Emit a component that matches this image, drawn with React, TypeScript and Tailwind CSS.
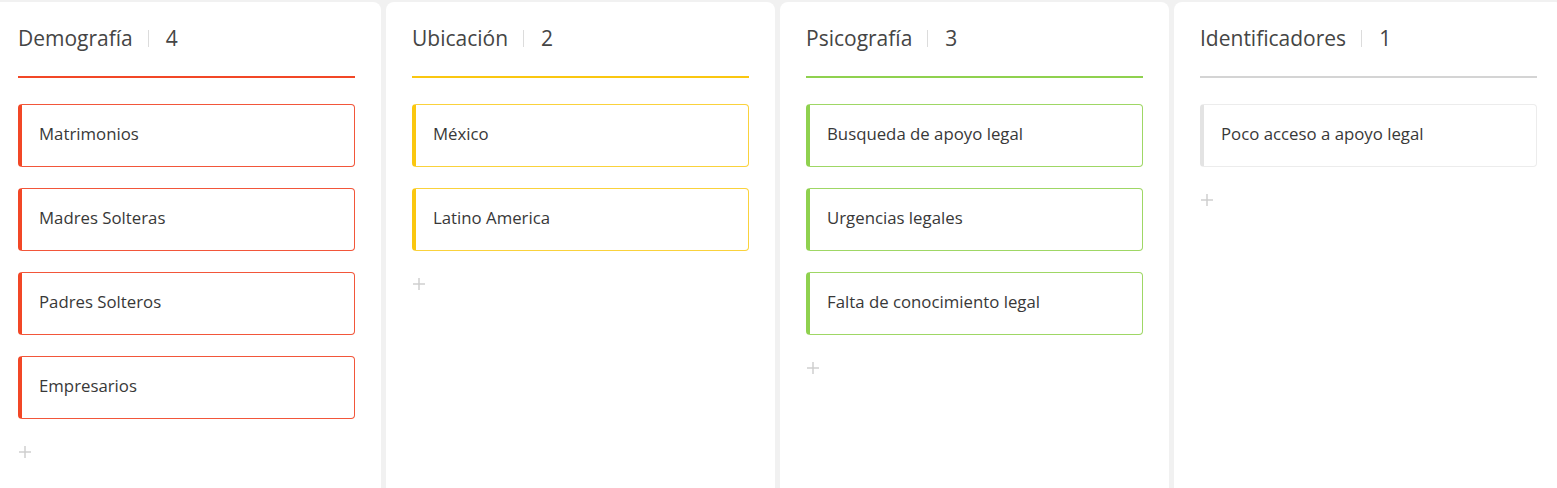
import React from 'react'

type Column = {
  title: string
  accent: string
  cardBorder: string
  lineClass: string
  items: string[]
}

const COLUMNS: Column[] = [
  {
    title: 'Demografía',
    accent: 'border-l-[#f24726]',
    cardBorder: 'border-[#f2563a]',
    lineClass: 'bg-[#f24726]',
    items: ['Matrimonios', 'Madres Solteras', 'Padres Solteros', 'Empresarios'],
  },
  {
    title: 'Ubicación',
    accent: 'border-l-[#fac710]',
    cardBorder: 'border-[#fad23c]',
    lineClass: 'bg-[#fac710]',
    items: ['México', 'Latino America'],
  },
  {
    title: 'Psicografía',
    accent: 'border-l-[#8fd14f]',
    cardBorder: 'border-[#9fd765]',
    lineClass: 'bg-[#8fd14f]',
    items: ['Busqueda de apoyo legal', 'Urgencias legales', 'Falta de conocimiento legal'],
  },
  {
    title: 'Identificadores',
    accent: 'border-l-[#e3e3e3]',
    cardBorder: 'border-[#ececec]',
    lineClass: 'bg-[#d4d4d4]',
    items: ['Poco acceso a apoyo legal'],
  },
]

function PlusIcon() {
  return (
    <svg width="14" height="14" viewBox="0 0 14 14" className="block">
      <path d="M7 1v12M1 7h12" stroke="#cfcfcf" strokeWidth="1.5" />
    </svg>
  )
}

function BoardColumn({ column }: { column: Column }) {
  return (
    <div className="w-[389px] shrink-0 bg-white rounded-t-[8px] px-[26px] pt-[24px]">
      {/* Header */}
      <div className="flex items-center h-[26px] pb-[2px] text-[21px] leading-[26px] text-[#454545]">
        <span>{column.title}</span>
        <span className="ml-[15px] mr-[17px] w-px h-[17px] bg-[#dcdcdc]" />
        <span>{column.items.length}</span>
      </div>
      <div className={`mt-[24px] h-[2px] ${column.lineClass}`} />

      {/* Cards */}
      <div className="mt-[26px] flex flex-col gap-[21px]">
        {column.items.map((item) => (
          <div
            key={item}
            className={`h-[63px] flex items-center rounded-[4px] border border-l-[4px] ${column.cardBorder} ${column.accent} pl-[17px] pb-[3px] text-[16.8px] text-[#383838]`}
          >
            {item}
          </div>
        ))}
      </div>
      <div className="mt-[26px] ml-0">
        <PlusIcon />
      </div>
    </div>
  )
}

export default function App() {
  return (
    <div
      className="w-[1557px] h-[488px] overflow-hidden bg-[#f1f1f1] pt-[2px]"
      style={{ fontFamily: '"Open Sans", "Noto Sans", sans-serif' }}
    >
      <div className="flex gap-[5px] ml-[-8px] h-full">
        {COLUMNS.map((c) => (
          <BoardColumn key={c.title} column={c} />
        ))}
      </div>
    </div>
  )
}
